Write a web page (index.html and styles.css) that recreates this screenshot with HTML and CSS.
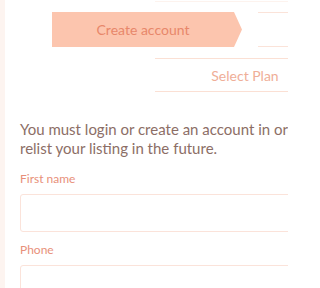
FILE: index.html
```html
<!DOCTYPE html>
<html>
<head>
<meta charset="utf-8">
<link rel="stylesheet" href="styles.css">
</head>
<body>
<div class="page">
  <aside class="strip"></aside>
  <main class="main">
    <div class="topline"></div>
    <div class="steps-row first">
      <div class="step active">Create account</div>
      <div class="step next"></div>
    </div>
    <div class="steps-row second">
      <div class="step plan">Select Plan</div>
    </div>
    <p class="intro">You must login or create an account in order to relist your listing in the future.</p>
    <form class="form">
      <label class="label">First name</label>
      <div class="input"></div>
      <label class="label">Phone</label>
      <div class="input"></div>
    </form>
  </main>
</div>
</body>
</html>
```
FILE: styles.css
```css
html, body {
  margin: 0;
  padding: 0;
  background: #ffffff;
  overflow: hidden;
  width: 288px;
  height: 288px;
}
.page {
  display: flex;
  width: 288px;
  height: 288px;
  overflow: hidden;
  font-family: "Lato", "Open Sans", sans-serif;
}
.strip {
  flex: 0 0 5px;
  background: #fdf4f0;
}
.main {
  flex: 1;
  min-width: 0;
  padding: 0 0 0 15px;
  overflow: hidden;
}
.topline {
  height: 1px;
  margin: 1px 0 0 135px;
  background: #fdf3ee;
}
.steps-row {
  display: flex;
  white-space: nowrap;
}
.steps-row.first {
  margin: 10px 0 0 32px;
  height: 35px;
}
.step {
  display: flex;
  align-items: center;
  justify-content: center;
  flex: none;
  font-size: 14px;
}
.step.active {
  width: 190px;
  height: 35px;
  background: #fcc5ae;
  color: #e8876a;
  clip-path: polygon(0 0, 182px 0, 190px 50%, 182px 100%, 0 100%);
  padding-right: 8px;
  box-sizing: border-box;
}
.step.next {
  margin-left: 16px;
  width: 120px;
  height: 35px;
  box-sizing: border-box;
  border-top: 1px solid #fbe3d9;
  border-bottom: 1px solid #fbe3d9;
}
.steps-row.second {
  margin: 11px 0 0 135px;
}
.step.plan {
  width: 180px;
  height: 34px;
  box-sizing: border-box;
  border-top: 1px solid #fbe0d4;
  border-bottom: 1px solid #fbe0d4;
  color: #efae98;
}
.intro {
  margin: 28px 0 0 0;
  width: 322px;
  font-size: 15px;
  line-height: 19px;
  color: #8c6e66;
}
.form {
  display: flex;
  flex-direction: column;
  margin-top: 13px;
}
.label {
  font-size: 12px;
  line-height: 16px;
  color: #e8907a;
}
.input {
  margin: 7px 0 10px 0;
  width: 300px;
  height: 38px;
  flex: none;
  box-sizing: border-box;
  border: 1px solid #fbe3da;
  border-radius: 3px;
}
```
